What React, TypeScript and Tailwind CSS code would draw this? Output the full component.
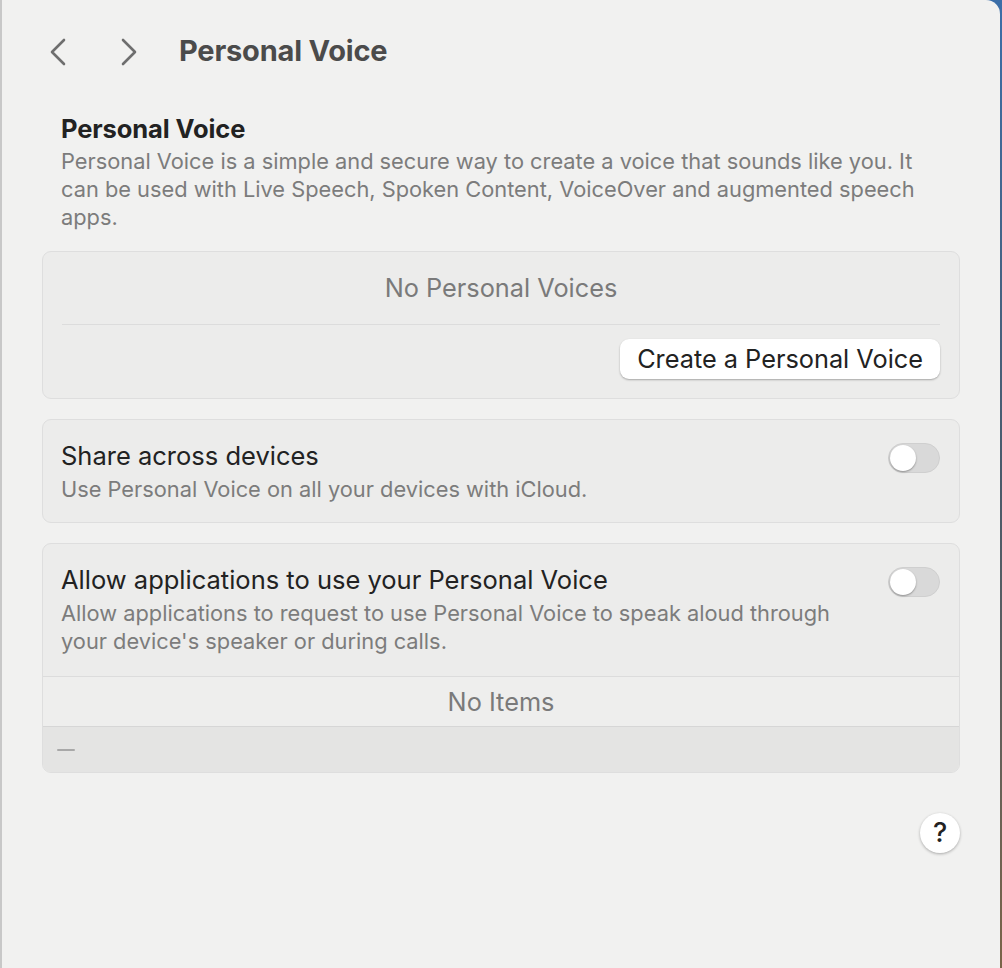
import React from "react";

function Toggle() {
  return (
    <div className="relative w-[52px] h-[30px] rounded-full bg-[#d9d9d9] border border-[#cfcfcf] shrink-0">
      <div className="absolute left-[1px] top-[1px] w-[26px] h-[26px] rounded-full bg-white shadow-[0_1px_2px_rgba(0,0,0,0.35)]" />
    </div>
  );
}

export default function App() {
  return (
    <div
      className="w-[1002px] h-[968px] flex bg-gradient-to-b from-[#3b6ea8] via-[#4a5a6a] to-[#7a6448]"
      style={{ fontFamily: "Inter, 'Noto Sans', sans-serif" }}
    >
      <div className="w-[1000px] h-[968px] bg-[#f1f1f0] border-l-2 border-[#c8c8c8] rounded-tr-[14px] flex flex-col">
        {/* header */}
        <div className="h-[102px] flex items-center pl-[44px]">
          <svg width="24" height="30" viewBox="0 0 24 30" className="mt-[2px]">
            <path d="M18 3 L6 15 L18 27" fill="none" stroke="#6e6e6e" strokeWidth="2.6" strokeLinecap="round" strokeLinejoin="round" />
          </svg>
          <svg width="24" height="30" viewBox="0 0 24 30" className="ml-[47px] mt-[2px]">
            <path d="M6 3 L18 15 L6 27" fill="none" stroke="#6e6e6e" strokeWidth="2.6" strokeLinecap="round" strokeLinejoin="round" />
          </svg>
          <div className="ml-[38px] text-[29px] font-bold text-[#4b4b4b] tracking-[-0.2px]">Personal Voice</div>
        </div>

        <div className="px-[40px] flex flex-col">
          {/* intro */}
          <div className="px-[19px] pt-[12px]">
            <div className="text-[25.5px] font-bold text-[#222] leading-[30px] tracking-[-0.1px]">Personal Voice</div>
            <div className="text-[21.8px] text-[#7c7c7c] leading-[28px] mt-[3px]">
              Personal Voice is a simple and secure way to create a voice that sounds like you. It can be used with Live Speech, Spoken Content, VoiceOver and augmented speech apps.
            </div>
          </div>

          {/* card 1 */}
          <div className="mt-[20px] rounded-[9px] bg-[#ececeb] border border-[#dedede] px-[19px] flex flex-col">
            <div className="h-[72px] flex items-center justify-center text-[25.3px] text-[#7a7a7a]">No Personal Voices</div>
            <div className="h-[1px] bg-[#dcdcdc]" />
            <div className="h-[73px] flex items-center justify-end">
              <div className="h-[40px] px-[17px] flex items-center rounded-[9px] bg-white shadow-[0_1px_2px_rgba(0,0,0,0.3)] text-[25.3px] text-[#222] mt-[-5px]">
                Create a Personal Voice
              </div>
            </div>
          </div>

          {/* card 2 */}
          <div className="mt-[20px] h-[104px] rounded-[9px] bg-[#ececeb] border border-[#dedede] pl-[18px] pr-[19px] flex items-start justify-between pt-[21px]">
            <div className="flex flex-col">
              <div className="text-[25.5px] text-[#222] leading-[30px]">Share across devices</div>
              <div className="text-[21.8px] text-[#7c7c7c] leading-[28px] mt-[4px]">Use Personal Voice on all your devices with iCloud.</div>
            </div>
            <div className="mt-[2px]"><Toggle /></div>
          </div>

          {/* card 3 */}
          <div className="mt-[20px] rounded-[9px] bg-[#ececeb] border border-[#dedede] flex flex-col overflow-hidden">
            <div className="pl-[18px] pr-[19px] pt-[21px] pb-[21px] flex items-start justify-between">
              <div className="flex flex-col">
                <div className="text-[25.5px] text-[#222] leading-[30px]">Allow applications to use your Personal Voice</div>
                <div className="text-[21.8px] text-[#7c7c7c] leading-[28px] mt-[4px] w-[805px]">
                  Allow applications to request to use Personal Voice to speak aloud through your device's speaker or during calls.
                </div>
              </div>
              <div className="mt-[2px]"><Toggle /></div>
            </div>
            <div className="h-[1px] bg-[#dcdcdc]" />
            <div className="h-[49px] flex items-center justify-center text-[25.3px] text-[#7a7a7a] bg-[#eeeeed]">No Items</div>
            <div className="h-[1px] bg-[#d6d6d6]" />
            <div className="h-[45px] bg-[#e4e4e3] flex items-center pl-[14px]">
              <div className="w-[18px] h-[2px] bg-[#a8a8a8] rounded-full" />
            </div>
          </div>

          {/* help */}
          <div className="flex justify-end mt-[40px]">
            <div className="w-[40px] h-[40px] rounded-full bg-white shadow-[0_1px_3px_rgba(0,0,0,0.3)] flex items-center justify-center text-[27px] font-medium text-[#222]">
              ?
            </div>
          </div>
        </div>
      </div>
    </div>
  );
}
